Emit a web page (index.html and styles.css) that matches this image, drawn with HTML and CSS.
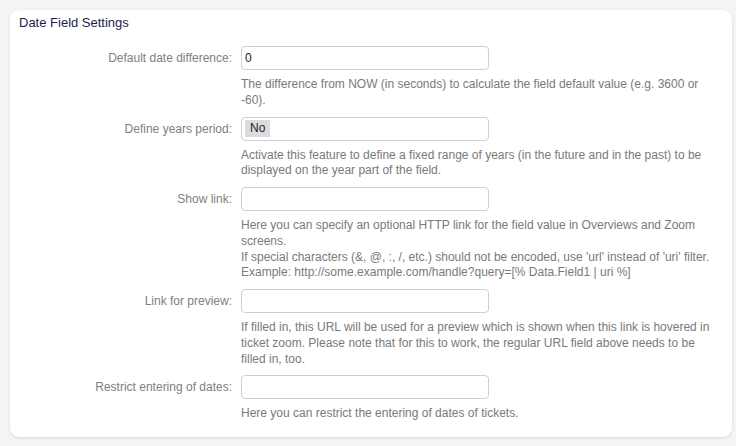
FILE: index.html
```html
<!DOCTYPE html>
<html>
<head>
<meta charset="utf-8">
<link rel="stylesheet" href="styles.css">
</head>
<body>
<div class="card">
  <h2 class="title">Date Field Settings</h2>
  <div class="form">
    <div class="row">
      <label class="label">Default date difference:</label>
      <div class="input"><span class="value">0</span></div>
      <p class="help">The difference from NOW (in seconds) to calculate the field default value (e.g. 3600 or -60).</p>
    </div>
    <div class="row">
      <label class="label">Define years period:</label>
      <div class="input"><span class="tag">No</span></div>
      <p class="help">Activate this feature to define a fixed range of years (in the future and in the past) to be displayed on the year part of the field.</p>
    </div>
    <div class="row">
      <label class="label">Show link:</label>
      <div class="input"></div>
      <p class="help">Here you can specify an optional HTTP link for the field value in Overviews and Zoom screens.<br>If special characters (&amp;, @, :, /, etc.) should not be encoded, use 'url' instead of 'uri' filter.<br>Example: http://some.example.com/handle?query=[% Data.Field1 | uri %]</p>
    </div>
    <div class="row">
      <label class="label">Link for preview:</label>
      <div class="input"></div>
      <p class="help">If filled in, this URL will be used for a preview which is shown when this link is hovered in ticket zoom. Please note that for this to work, the regular URL field above needs to be filled in, too.</p>
    </div>
    <div class="row">
      <label class="label">Restrict entering of dates:</label>
      <div class="input"></div>
      <p class="help">Here you can restrict the entering of dates of tickets.</p>
    </div>
  </div>
</div>
</body>
</html>
```

FILE: styles.css
```css
html, body {
  margin: 0;
  padding: 0;
}
body {
  background: #f4f4f6;
  font-family: "Liberation Sans", Arial, Helvetica, sans-serif;
  padding: 10px 4px 9px 10px;
}
.card {
  background: #ffffff;
  border-radius: 9px;
  box-shadow: 0 1px 3px rgba(0, 0, 0, 0.12);
  padding: 4px 0 15px 0;
}
.title {
  margin: 0 0 15px 9px;
  font-size: 13px;
  font-weight: normal;
  line-height: 17px;
  color: #1c1b52;
}
.row {
  display: grid;
  grid-template-columns: 222px 476px;
  column-gap: 9px;
  row-gap: 7px;
  margin-bottom: 8px;
}
.row:last-child {
  margin-bottom: 0;
}
.label {
  grid-column: 1;
  grid-row: 1;
  align-self: center;
  text-align: right;
  font-size: 12px;
  color: #808080;
}
.input {
  grid-column: 2;
  grid-row: 1;
  width: 243px;
  height: 22px;
  border: 1px solid #cfcfd3;
  border-radius: 4px;
  background: #fff;
  display: flex;
  align-items: center;
  padding-left: 3px;
  box-sizing: content-box;
}
.value {
  font-size: 12px;
  color: #222;
}
.tag {
  font-size: 12px;
  color: #222;
  background: #dcdce0;
  padding: 2px 5px;
  line-height: 13px;
}
.help {
  grid-column: 2;
  grid-row: 2;
  margin: 0;
  font-size: 12px;
  line-height: 15.75px;
  color: #7a7a7a;
}
```
